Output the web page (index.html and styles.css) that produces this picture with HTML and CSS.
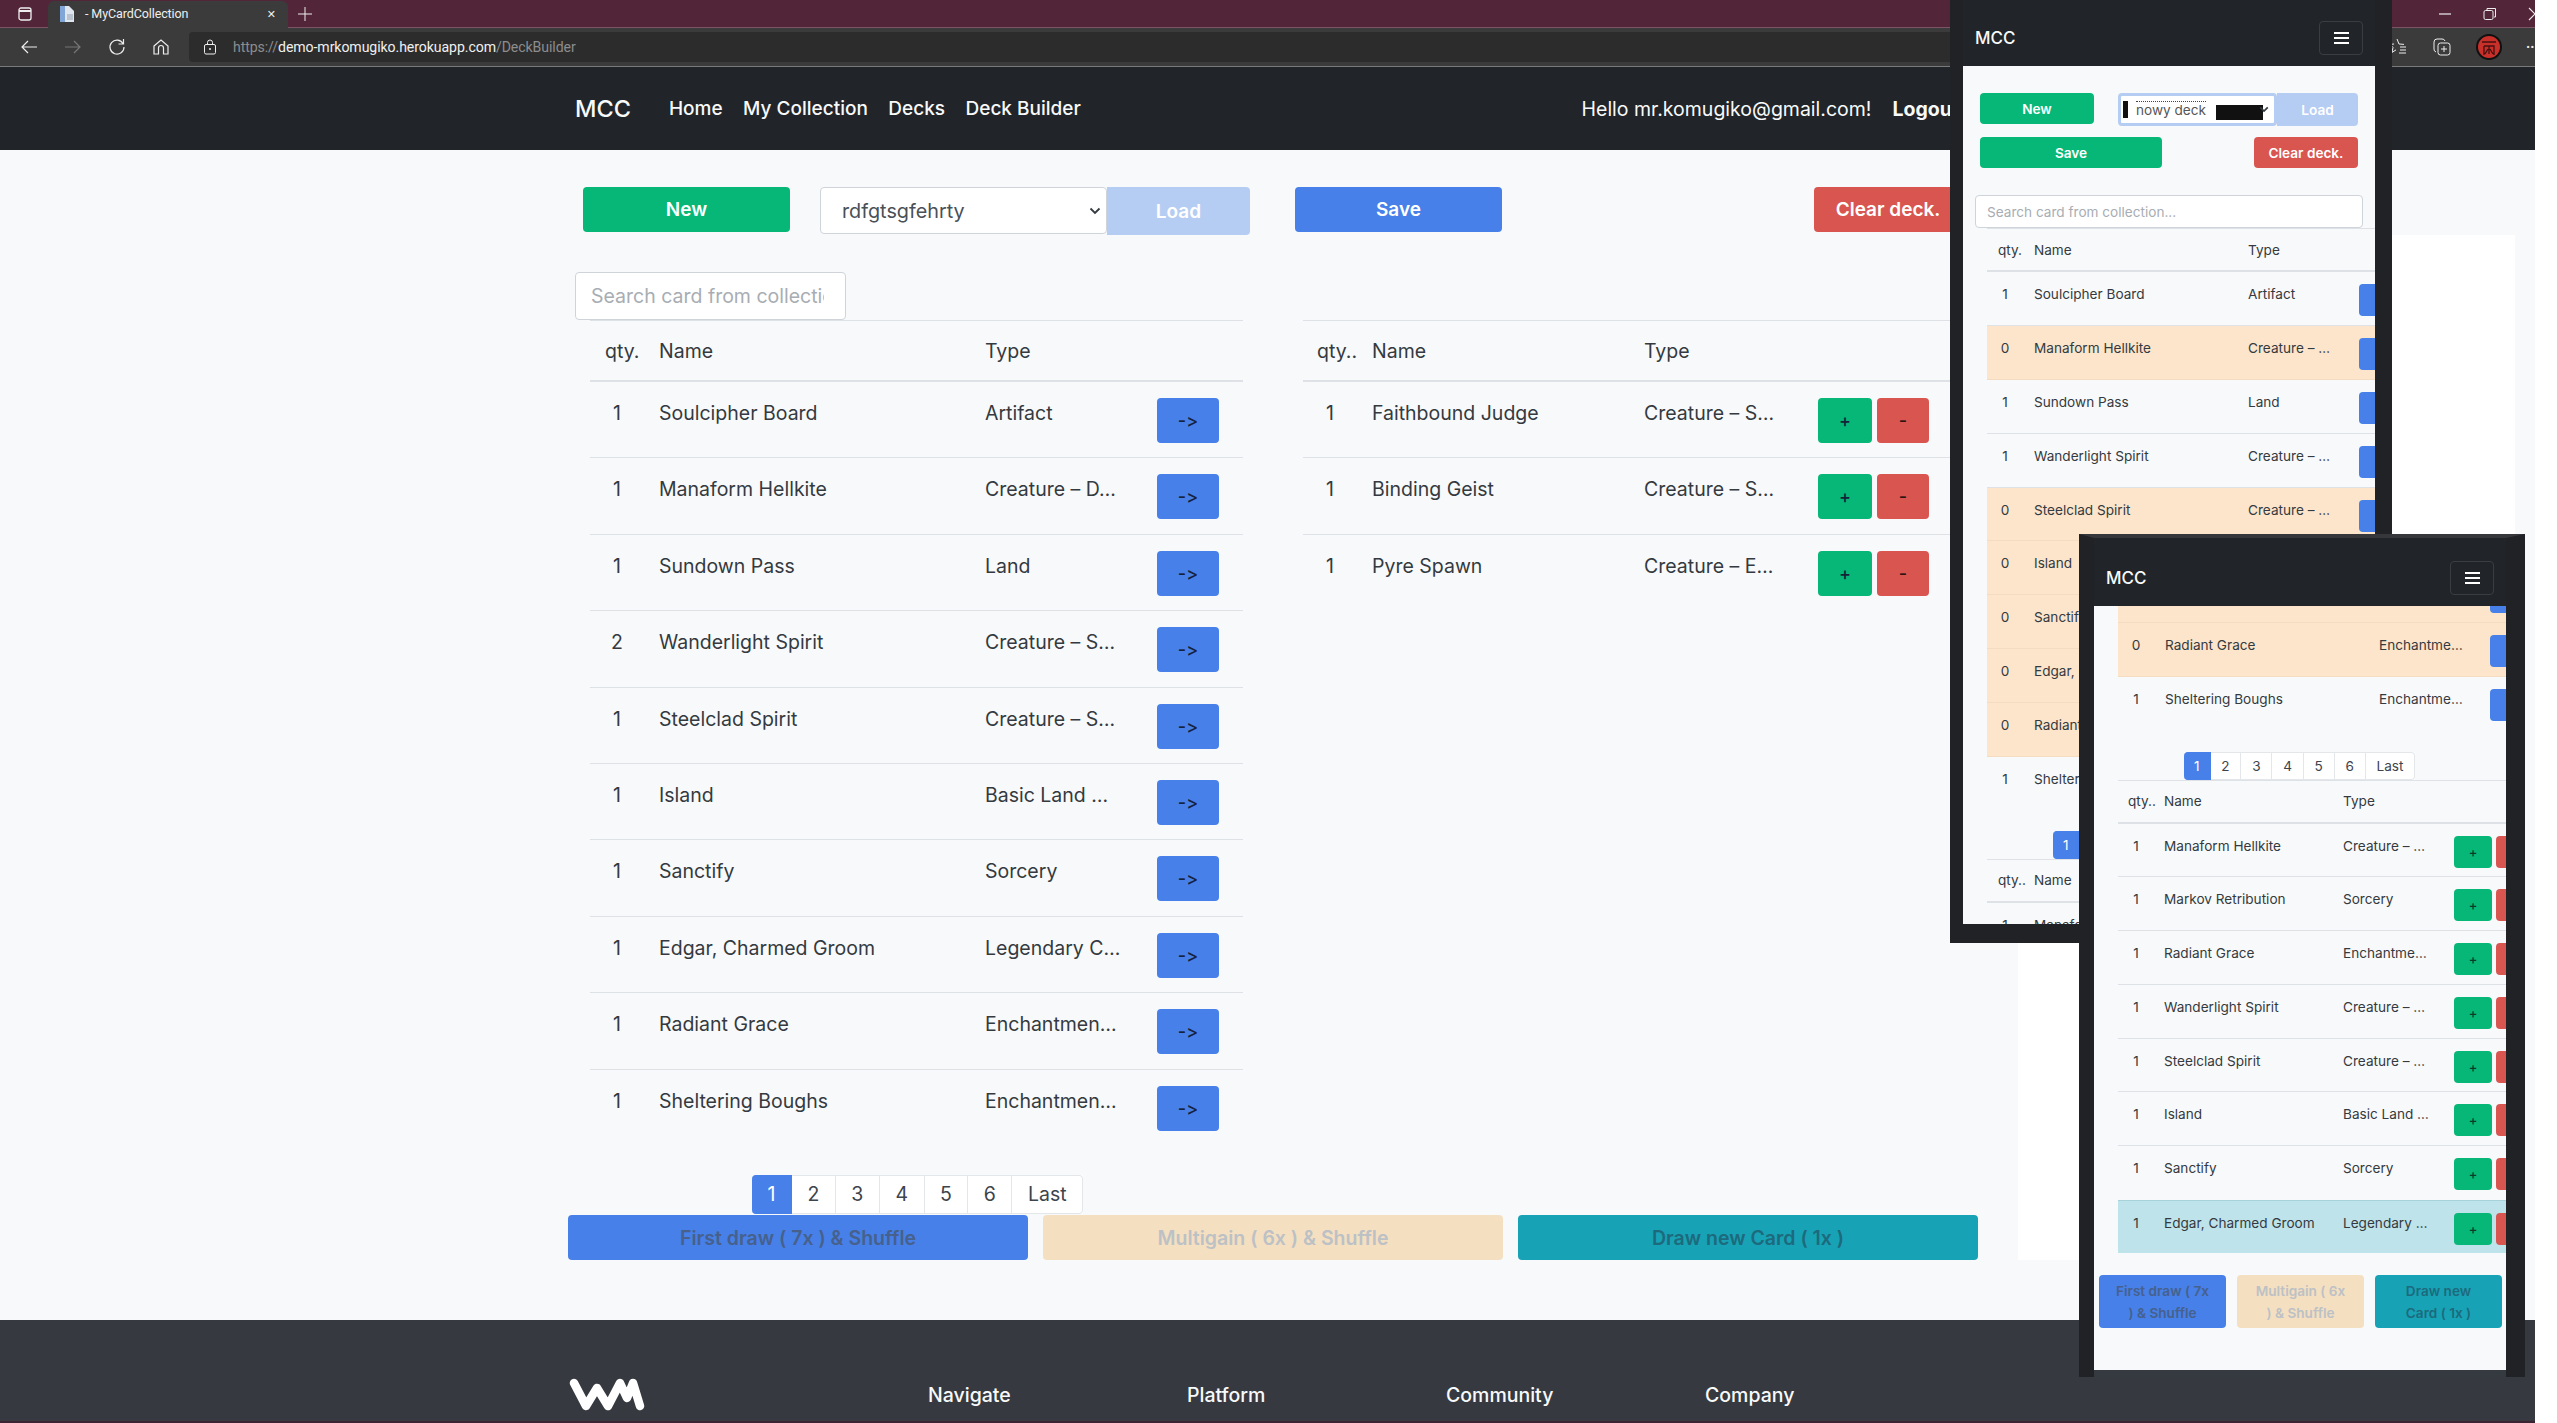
FILE: index.html
```html
<!DOCTYPE html>
<html lang="en">
<head>
<meta charset="utf-8">
<title>MyCardCollection</title>
<link rel="stylesheet" href="styles.css">
</head>
<body>
<div class="browser">
  <div class="tabstrip">
    <svg class="tabs-ico" width="16" height="16" viewBox="0 0 16 16"><rect x="2" y="2" width="12" height="12" rx="2" fill="none" stroke="#eee" stroke-width="1.3"/><path d="M2 5h12" stroke="#eee" stroke-width="2"/></svg>
    <div class="tab">
      <svg width="16" height="18" viewBox="0 0 16 18"><path d="M1 1h9l5 5v11H1z" fill="#dfe6ee"/><path d="M1 1h5v16H1z" fill="#7fa6d6"/><path d="M8 9h6v6H8z" fill="#b9c4d0"/></svg>
      <span class="tab-title">- MyCardCollection</span>
      <span class="tab-x">✕</span>
    </div>
    <svg class="plus" width="14" height="14" viewBox="0 0 14 14"><path d="M7 0v14M0 7h14" stroke="#eee" stroke-width="1"/></svg>
    <div class="winctl">
      <svg width="14" height="14" viewBox="0 0 14 14"><path d="M1 7h12" stroke="#eee" stroke-width="1.2"/></svg>
      <svg width="14" height="14" viewBox="0 0 14 14"><rect x="1" y="3.5" width="9" height="9" rx="1.5" fill="none" stroke="#eee"/><path d="M4 3V1.5h8.5V10H11" fill="none" stroke="#eee"/></svg>
      <svg width="14" height="14" viewBox="0 0 14 14"><path d="M1 1l12 12M13 1L1 13" stroke="#eee" stroke-width="1.1"/></svg>
    </div>
  </div>
  <div class="toolbar">
    <svg class="tb-ico" width="18" height="18" viewBox="0 0 18 18"><path d="M17 9H2M8 3L2 9l6 6" fill="none" stroke="#eee" stroke-width="1.2"/></svg>
    <svg class="tb-ico" width="18" height="18" viewBox="0 0 18 18"><path d="M1 9h15M10 3l6 6-6 6" fill="none" stroke="#777" stroke-width="1.2"/></svg>
    <svg class="tb-ico" width="18" height="18" viewBox="0 0 18 18"><path d="M15 5.5A7 7 0 1 0 16 9M15.5 1v5h-5" fill="none" stroke="#eee" stroke-width="1.2"/></svg>
    <svg class="tb-ico" width="18" height="18" viewBox="0 0 18 18"><path d="M2 8l7-6 7 6v8h-4.500v-6a2.500 2.500 0 0 0-5 0v6H2z" fill="none" stroke="#eee" stroke-width="1.200"/></svg>
    <div class="address">
      <svg width="14" height="16" viewBox="0 0 14 16"><rect x="1.500" y="5.500" width="11" height="9.500" rx="1.500" fill="none" stroke="#eee"/><path d="M4.500 5.500V3.500a2.500 2.500 0 0 1 5 0v2" fill="none" stroke="#eee"/><circle cx="7" cy="10" r="1" fill="#eee"/></svg>
      <span class="url"><span class="url-dim">https://</span>demo-mrkomugiko.herokuapp.com<span class="url-dim">/DeckBuilder</span></span>
    </div>
    <div class="tb-right">
      <svg width="20" height="20" viewBox="0 0 20 20"><path d="M9 2l2 5 5 .4M6 7l-4 .4 3 3-1 5 4-2.500" fill="none" stroke="#eee"/><path d="M12 10h6M12 13h6M11 16h7" stroke="#eee"/></svg>
      <svg width="20" height="20" viewBox="0 0 20 20"><path d="M4 15a3 3 0 0 1-2-3V5a3 3 0 0 1 3-3h5a3 3 0 0 1 3 2" fill="none" stroke="#eee"/><rect x="6" y="6" width="12" height="12" rx="2.500" fill="none" stroke="#eee"/><path d="M12 9v6M9 12h6" stroke="#eee"/></svg>
      <svg width="26" height="26" viewBox="0 0 26 26"><circle cx="13" cy="13" r="12" fill="#c9302a" stroke="#111" stroke-width="2"/><path d="M6 8h14M8 12h10v9M8 12v9M13 12v8M9 20l3-5M17 20l-3-5" fill="none" stroke="#451010" stroke-width="1.300"/></svg>
      <span class="dots">···</span>
    </div>
  </div>
  <nav class="navbar">
    <span class="brand">MCC</span>
    <a class="nav-link">Home</a>
    <a class="nav-link">My Collection</a>
    <a class="nav-link">Decks</a>
    <a class="nav-link">Deck Builder</a>
    <div class="nav-right">
      <span>Hello mr.komugiko@gmail.com!</span>
      <strong class="logout">Logout</strong>
    </div>
  </nav>
  <main class="main">
    <div class="controls">
      <button class="btn green w207">New</button>
      <div class="select"><span>rdfgtsgfehrty</span><svg width="12" height="8" viewBox="0 0 12 8"><path d="M1.500 1.500L6 6l4.500-4.500" fill="none" stroke="#343a40" stroke-width="1.800"/></svg></div>
      <button class="btn load">Load</button>
      <button class="btn blue w207 save">Save</button>
      <button class="btn red clear">Clear deck.</button>
    </div>
    <div class="columns">
      <section class="col-left">
        <input class="search" placeholder="Search card from collection...">
        <div class="table t-main">
          <div class="head"><span class="h-qty">qty.</span><span class="name">Name</span><span class="type">Type</span></div>
          <div class="row"><span class="qty">1</span><span class="name">Soulcipher Board</span><span class="type">Artifact</span><button class="act blue">-&gt;</button></div>
          <div class="row"><span class="qty">1</span><span class="name">Manaform Hellkite</span><span class="type">Creature – D…</span><button class="act blue">-&gt;</button></div>
          <div class="row"><span class="qty">1</span><span class="name">Sundown Pass</span><span class="type">Land</span><button class="act blue">-&gt;</button></div>
          <div class="row"><span class="qty">2</span><span class="name">Wanderlight Spirit</span><span class="type">Creature – S…</span><button class="act blue">-&gt;</button></div>
          <div class="row"><span class="qty">1</span><span class="name">Steelclad Spirit</span><span class="type">Creature – S…</span><button class="act blue">-&gt;</button></div>
          <div class="row"><span class="qty">1</span><span class="name">Island</span><span class="type">Basic Land …</span><button class="act blue">-&gt;</button></div>
          <div class="row"><span class="qty">1</span><span class="name">Sanctify</span><span class="type">Sorcery</span><button class="act blue">-&gt;</button></div>
          <div class="row"><span class="qty">1</span><span class="name">Edgar, Charmed Groom</span><span class="type">Legendary C…</span><button class="act blue">-&gt;</button></div>
          <div class="row"><span class="qty">1</span><span class="name">Radiant Grace</span><span class="type">Enchantmen…</span><button class="act blue">-&gt;</button></div>
          <div class="row"><span class="qty">1</span><span class="name">Sheltering Boughs</span><span class="type">Enchantmen…</span><button class="act blue">-&gt;</button></div>
        </div>
      </section>
      <section class="col-right">
        <div class="table t-main t-deck">
          <div class="head"><span class="h-qty">qty..</span><span class="name">Name</span><span class="type">Type</span></div>
          <div class="row"><span class="qty">1</span><span class="name">Faithbound Judge</span><span class="type">Creature – S…</span><button class="act green">+</button><button class="act red">-</button></div>
          <div class="row"><span class="qty">1</span><span class="name">Binding Geist</span><span class="type">Creature – S…</span><button class="act green">+</button><button class="act red">-</button></div>
          <div class="row"><span class="qty">1</span><span class="name">Pyre Spawn</span><span class="type">Creature – E…</span><button class="act green">+</button><button class="act red">-</button></div>
        </div>
      </section>
    </div>
    <div class="pager pager-main"><span class="page active">1</span><span class="page">2</span><span class="page">3</span><span class="page">4</span><span class="page">5</span><span class="page">6</span><span class="page">Last</span></div>
    <div class="draws">
      <button class="draw d-blue">First draw ( 7x ) &amp; Shuffle</button>
      <button class="draw d-sand">Multigain ( 6x ) &amp; Shuffle</button>
      <button class="draw d-teal">Draw new Card ( 1x )</button>
    </div>
  </main>
  <footer class="footer">
    <svg class="logo" width="76" height="34" viewBox="0 0 76 34"><path d="M5 5L17 28L28 10L39 28L51 5L58 20L64 5L71 28" fill="none" stroke="#fff" stroke-width="8.500" stroke-linecap="round" stroke-linejoin="round"/></svg>
    <span class="f-link f-nav">Navigate</span>
    <span class="f-link">Platform</span>
    <span class="f-link">Community</span>
    <span class="f-link">Company</span>
  </footer>
</div>

<div class="backdrop"></div>

<div class="phone phone-one">
  <div class="p-inner">
    <div class="p-nav"><span class="p-brand">MCC</span><span class="toggler"><i></i><i></i><i></i></span></div>
    <div class="p-controls">
      <button class="btn green p-new">New</button>
      <div class="p-select"><i class="glitch-a"></i><span>nowy deck</span><i class="glitch-b"></i><svg width="10" height="7" viewBox="0 0 12 8"><path d="M1.500 1.500L6 6l4.500-4.500" fill="none" stroke="#343a40" stroke-width="2"/></svg></div>
      <button class="btn load p-load">Load</button>
    </div>
    <div class="p-controls p-second">
      <button class="btn green p-save">Save</button>
      <button class="btn red p-clear">Clear deck.</button>
    </div>
    <input class="search p-search" placeholder="Search card from collection...">
    <div class="table t-phone">
      <div class="head"><span class="h-qty">qty.</span><span class="name">Name</span><span class="type">Type</span></div>
      <div class="row"><span class="qty">1</span><span class="name">Soulcipher Board</span><span class="type">Artifact</span><button class="act blue"></button></div>
      <div class="row out"><span class="qty">0</span><span class="name">Manaform Hellkite</span><span class="type">Creature – …</span><button class="act blue"></button></div>
      <div class="row"><span class="qty">1</span><span class="name">Sundown Pass</span><span class="type">Land</span><button class="act blue"></button></div>
      <div class="row"><span class="qty">1</span><span class="name">Wanderlight Spirit</span><span class="type">Creature – …</span><button class="act blue"></button></div>
      <div class="row out"><span class="qty">0</span><span class="name">Steelclad Spirit</span><span class="type">Creature – …</span><button class="act blue"></button></div>
      <div class="row out"><span class="qty">0</span><span class="name">Island</span><span class="type">Basic Land …</span><button class="act blue"></button></div>
      <div class="row out"><span class="qty">0</span><span class="name">Sanctify</span><span class="type">Sorcery</span><button class="act blue"></button></div>
      <div class="row out"><span class="qty">0</span><span class="name">Edgar, Charmed Groom</span><span class="type">Legendary …</span><button class="act blue"></button></div>
      <div class="row out"><span class="qty">0</span><span class="name">Radiant Grace</span><span class="type">Enchantme…</span><button class="act blue"></button></div>
      <div class="row plain"><span class="qty">1</span><span class="name">Sheltering Boughs</span><span class="type">Enchantme…</span><button class="act blue"></button></div>
    </div>
    <div class="pager pager-one"><span class="page active">1</span><span class="page">2</span><span class="page">3</span></div>
    <div class="table t-phone t-after">
      <div class="head"><span class="h-qty">qty..</span><span class="name">Name</span><span class="type">Type</span></div>
      <div class="row"><span class="qty">1</span><span class="name">Manaform Hellkite</span></div>
    </div>
  </div>
</div>

<div class="phone phone-two">
  <div class="p-inner">
    <div class="p-nav"><span class="p-brand">MCC</span><span class="toggler"><i></i><i></i><i></i></span></div>
    <div class="p-scroll">
      <div class="table t-phone">
        <div class="row out partial"><button class="act blue"></button></div>
        <div class="row out"><span class="qty">0</span><span class="name">Radiant Grace</span><span class="type">Enchantme…</span><button class="act blue"></button></div>
        <div class="row plain"><span class="qty">1</span><span class="name">Sheltering Boughs</span><span class="type">Enchantme…</span><button class="act blue"></button></div>
      </div>
      <div class="pager pager-two"><span class="page active">1</span><span class="page">2</span><span class="page">3</span><span class="page">4</span><span class="page">5</span><span class="page">6</span><span class="page">Last</span></div>
      <div class="table t-phone t-phone-deck">
        <div class="head"><span class="h-qty">qty..</span><span class="name">Name</span><span class="type">Type</span></div>
        <div class="row"><span class="qty">1</span><span class="name">Manaform Hellkite</span><span class="type">Creature – …</span><button class="act green">+</button><button class="act red"></button></div>
        <div class="row"><span class="qty">1</span><span class="name">Markov Retribution</span><span class="type">Sorcery</span><button class="act green">+</button><button class="act red"></button></div>
        <div class="row"><span class="qty">1</span><span class="name">Radiant Grace</span><span class="type">Enchantme…</span><button class="act green">+</button><button class="act red"></button></div>
        <div class="row"><span class="qty">1</span><span class="name">Wanderlight Spirit</span><span class="type">Creature – …</span><button class="act green">+</button><button class="act red"></button></div>
        <div class="row"><span class="qty">1</span><span class="name">Steelclad Spirit</span><span class="type">Creature – …</span><button class="act green">+</button><button class="act red"></button></div>
        <div class="row"><span class="qty">1</span><span class="name">Island</span><span class="type">Basic Land …</span><button class="act green">+</button><button class="act red"></button></div>
        <div class="row"><span class="qty">1</span><span class="name">Sanctify</span><span class="type">Sorcery</span><button class="act green">+</button><button class="act red"></button></div>
        <div class="row info"><span class="qty">1</span><span class="name">Edgar, Charmed Groom</span><span class="type">Legendary …</span><button class="act green">+</button><button class="act red"></button></div>
      </div>
      <div class="p-draws">
        <button class="draw d-blue">First draw ( 7x ) &amp; Shuffle</button>
        <button class="draw d-sand">Multigain ( 6x ) &amp; Shuffle</button>
        <button class="draw d-teal">Draw new Card ( 1x )</button>
      </div>
    </div>
  </div>
</div>
</body>
</html>
```
FILE: styles.css
```css
* { box-sizing: border-box; }
html, body { margin: 0; padding: 0; }
body {
  width: 2557px;
  height: 1423px;
  overflow: hidden;
  position: relative;
  background: #fff;
  color: #343a40;
  font-family: Inter, "Noto Sans", sans-serif;
  font-variant-ligatures: none;
  font-feature-settings: "calt" 0, "liga" 0;
}
button { font-family: inherit; font-feature-settings: inherit; border: 0; padding: 0; }

.browser { width: 2535px; height: 1423px; display: flex; flex-direction: column; overflow: hidden; background: #f8f9fa; }

/* browser chrome */
.tabstrip { height: 28px; background: #532539; border-bottom: 1px solid #7b5466; display: flex; align-items: center; padding-left: 17px; }
.tabs-ico { margin-right: 15px; }
.tab { width: 240px; height: 27px; background: #3b3b3b; border-radius: 6px 6px 0 0; display: flex; align-items: center; padding: 0 10px 0 11px; margin-top: 1px; }
.tab-title { font: 12.500px/1 Roboto, sans-serif; color: #eee; margin-left: 10px; flex: 1; letter-spacing: -.1px; }
.tab-x { font: 11px/1 "DejaVu Sans", sans-serif; color: #eee; margin-right: 2px; }
.plus { margin-left: 10px; }
.winctl { margin-left: auto; display: flex; gap: 31px; margin-right: -7px; }
.toolbar { height: 39px; background: #3b3b3b; border-bottom: 1px solid #7a7a7a; display: flex; align-items: center; padding: 0 0 0 20px; }
.tb-ico { margin-right: 26px; flex: none; }
.address { width: 1780px; height: 30px; margin-left: -7px; background: #2c2c2c; border-radius: 4px; display: flex; align-items: center; padding-left: 14px; gap: 16px; }
.url { font: 14.100px/1 Roboto, sans-serif; color: #f0f0f0; letter-spacing: -.08px; }
.url-dim { color: #8d8d8d; }
.tb-right { margin-left: auto; display: flex; align-items: center; gap: 24px; padding-right: 0; margin-right: -3px; }
.dots { color: #eee; font: 700 14px/1 Roboto, sans-serif; width: 12px; overflow: hidden; }

/* navbar */
.navbar { height: 83px; flex: none; background: #212529; color: #f8f9fa; display: flex; align-items: center; padding: 0 576px 0 575px; font-size: 19px; }
.brand { font-size: 23.500px; margin-right: 38px; font-weight: 500; }
.nav-link { margin-right: 20.500px; font-weight: 500; }
.nav-right { margin-left: auto; display: flex; gap: 21px; font-size: 19.500px; }
.logout { font-weight: 700; }

/* main */
.main { flex: none; height: 1170px; padding-top: 37px; }
.controls { display: flex; align-items: flex-start; margin-left: 583px; height: 48px; }
.btn { height: 45px; color: #fff; font-size: 19px; font-weight: 600; border-radius: 4px; flex: none; }
.green { background: #07b777; }
.blue { background: #4680e8; }
.red { background: #d95550; }
.w207 { width: 207px; }
.select { width: 287px; height: 47px; margin-left: 30px; background: #fff; border: 1px solid #ced4da; border-radius: 4px; display: flex; align-items: center; justify-content: space-between; padding: 0 5px 0 21px; font-size: 19.800px; color: #495057; }
.load { background: #b6cdf3; height: 48px; width: 143px; border-radius: 0 4px 4px 0; }
.save { margin-left: 45px; }
.clear { margin-left: 312px; width: 148px; }

.columns { display: flex; margin-top: 37px; height: 874px; }
.col-left { width: 668px; margin-left: 575px; }
.col-right { width: 660px; margin-left: 60px; padding-top: 48px; }
.search { display: block; width: 271px; height: 48px; padding: 0 21px 0 15px; background: #fff; border: 1px solid #ced4da; border-radius: 4px; font: 19.500px Inter, sans-serif; color: #343a40; outline: 0; }
.search::placeholder { color: #a8adb3; opacity: 1; }

/* shared table */
.t-main { --fs: 19.500px; --row: 76.400px; --head: 62px; --qty: 54px; --qgap: 15px; --name: 326px; --type: 172px; --btn: 62px; --bh: 45px; --bt: 16px; --pt: 19px; --lh: 24px; --hq: 15px; }
.t-main:not(.t-deck) { margin-left: 15px; }
.t-deck { --name: 272px; --type: 174px; --hq: 14px; }
.t-phone { --fs: 13.600px; --row: 53.900px; --head: 44px; --qty: 36px; --qgap: 11px; --name: 214px; --type: 111px; --btn: 60px; --bh: 32px; --bt: 12px; --pt: 13px; --lh: 18px; --hq: 11px; margin-left: 24px; }
.t-phone-deck { --row: 53.700px; --name: 179px; --type: 111px; --qgap: 10px; --btn: 38px; --hq: 10px; }
.table { font-size: var(--fs); }
.head { height: var(--head); display: flex; align-items: center; border-top: 1px solid #dee2e6; border-bottom: 2px solid #dee2e6; line-height: var(--lh); }
.h-qty { width: calc(var(--qty) + var(--qgap)); padding-left: var(--hq); flex: none; white-space: nowrap; }
.name, .type { flex: none; white-space: nowrap; overflow: hidden; }
.name { width: var(--name); }
.type { width: var(--type); }
.row { height: var(--row); display: flex; align-items: flex-start; border-bottom: 1px solid #dee2e6; line-height: var(--lh); overflow: hidden; }
.row:last-child { border-bottom: 0; }
.row > .qty, .row > .name, .row > .type { margin-top: var(--pt); }
.qty { width: var(--qty); margin-right: var(--qgap); text-align: center; flex: none; }
.act { width: var(--btn); height: var(--bh); margin-top: var(--bt); border-radius: 4px; color: #16223a; font-size: 18px; font-weight: 500; flex: none; }
.t-deck .act.green { width: 54px; }
.t-deck .act.red { width: 52px; margin-left: 5px; color: #2a1515; }
.t-phone-deck .act.green { width: 38px; font-size: 13px; color: #0c3b2a; }
.t-phone-deck .act.red { width: 40px; margin-left: 4px; }
.row.out { background: #fce5cb; border-bottom-color: #f3dcc2; }
.row.info { background: #bee3ea; border-bottom: 0; border-top: 1px solid #a8d2da; }
.row.plain { border-bottom: 0; }
.row.partial { height: 17px; }
.row.partial .act { margin-top: -25px; margin-left: 372px; }
.t-phone-deck .row:nth-child(8) { border-bottom: 0; }

/* pagination */
.pager { display: flex; background: #fff; width: max-content; }
.page { border: 1px solid #e4e7ea; border-left: 0; color: #3d444b; }
.page.active { background: #4680e8; color: #fff; border-color: #4680e8; border-radius: 4px 0 0 4px; }
.page:last-child { border-radius: 0 4px 4px 0; }
.pager-main { margin: 29px 0 0 752px; height: 39px; font-size: 19.500px; }
.pager-main .page { padding: 0 15.500px; line-height: 37px; }
.pager-main .page.active { padding: 0 15.500px; }
.pager-one, .pager-two { height: 28px; font-size: 13.600px; }
.pager-one .page, .pager-two .page { padding: 0 10.800px; line-height: 26px; }
.pager-one .page.active, .pager-two .page.active { padding: 0 10px; }
.pager-one { margin: 20px 0 0 90px; }
.pager-two { margin: 21px 0 0 90px; }
.t-after { margin-top: 0; }

/* draw buttons */
.draws { display: flex; gap: 15px; margin: 1px 0 0 568px; }
.draw { width: 460px; height: 45px; border-radius: 4px; font-size: 19.500px; font-weight: 600; flex: none; }
.d-blue { background: #4680e8; color: #47608c; }
.d-sand { background: #f5dfc1; color: #bcc1c5; }
.d-teal { background: #18a2b5; color: #1d6a7d; }

/* footer */
.footer { height: 103px; flex: none; background: #363a40; color: #f8f9fa; border-bottom: 2px solid #3a2431; display: flex; align-items: flex-start; padding: 58px 0 0 569px; font-size: 19.500px; }
.logo { margin-right: 283px; flex: none; }
.f-link { width: 259px; flex: none; font-weight: 500; line-height: 34px; }

/* backdrop and floating windows */
.backdrop { position: absolute; left: 2018px; top: 235px; width: 497px; height: 1025px; background: #fff; }
.phone { position: absolute; background: #343a40; }
.phone-one { left: 1950px; top: 0; width: 442px; height: 943px; border: solid #202225; border-width: 0 17px 19px 13px; }
.phone-two { left: 2079px; top: 534px; width: 446px; height: 843px; border: solid #202225; border-width: 4px 19px 0 15px; border-top-color: #35373b; padding-bottom: 7px; }
.p-inner { height: 100%; background: #f8f9fa; overflow: hidden; font-size: 13.600px; }
.p-nav { height: 66px; background: #212529; display: flex; align-items: center; justify-content: space-between; padding: 10px 12px 0; color: #f8f9fa; }
.phone-two .p-nav { height: 68px; padding-top: 12px; }
.p-brand { font-size: 17px; font-weight: 500; }
.toggler { width: 44px; height: 34px; border: 1px solid #3a3d42; border-radius: 4px; display: flex; flex-direction: column; align-items: center; justify-content: center; gap: 3px; }
.toggler i { width: 15px; height: 2px; background: #fff; }
.p-controls { display: flex; margin: 27px 0 0 17px; align-items: flex-start; }
.p-second { margin-top: 11px; }
.p-controls .btn { font-size: 13.600px; height: 31px; }
.p-new { width: 114px; }
.p-select { width: 159px; height: 33px; margin-left: 24px; background: #fff; border: 3px solid #b6cdf3; border-radius: 4px; display: flex; align-items: center; padding-left: 2px; font-size: 13.600px; color: #555; position: relative; }
.p-select span { margin-left: 8px; border-top: 1px dotted #444; }
.p-select svg { position: absolute; right: 5px; top: 10px; }
.glitch-a { width: 5px; height: 17px; background: #111; }
.glitch-b { position: absolute; left: 95px; top: 9px; width: 47px; height: 15px; background: #111; }
.p-controls .p-load { width: 81px; height: 33px; }
.p-save { width: 182px; }
.p-clear { width: 104px; margin-left: 92px; }
.p-search { width: 388px; height: 33px; margin: 27px 0 0 12px; font-size: 13.600px; padding: 0 11px; }
.p-scroll { height: 770px; }
.p-draws { display: flex; gap: 11px; margin: 22px 0 0 5px; }
.p-draws .draw { width: 127px; height: 53px; font-size: 13.600px; line-height: 22px; padding: 0 16px; }
```
